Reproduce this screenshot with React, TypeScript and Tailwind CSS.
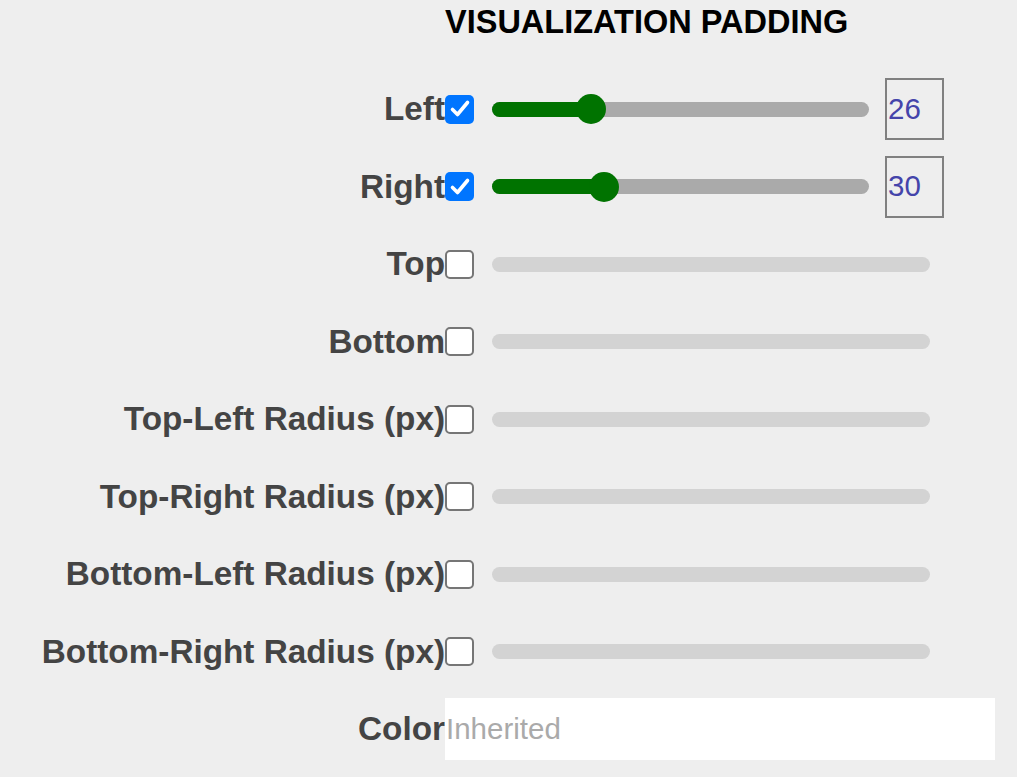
import React from "react";

const font = { fontFamily: '"Liberation Sans", Arial, sans-serif' };

function Check({ checked }: { checked: boolean }) {
  if (checked) {
    return (
      <div className="w-[29px] h-[29px] rounded-[5px] bg-[#0075ff] flex items-center justify-center shrink-0">
        <svg width="22" height="22" viewBox="0 0 22 22">
          <path d="M3.5 11.5 L8.5 16.5 L18.5 4.5" fill="none" stroke="#fff" strokeWidth="3.6" strokeLinecap="round" strokeLinejoin="round" />
        </svg>
      </div>
    );
  }
  return <div className="w-[29px] h-[29px] rounded-[5px] bg-white border-[2.5px] border-[#767676] shrink-0" />;
}

function Row({ label, checked, value, pos }: { label: string; checked: boolean; value?: number; pos?: number }) {
  return (
    <>
      <div className="h-[77.5px] flex items-center justify-end text-[33.3px] font-bold text-[#444444] whitespace-nowrap">{label}</div>
      <div className="h-[77.5px] flex items-center">
        <Check checked={checked} />
        {checked ? (
          <>
            <div className="ml-[18px] w-[377px] h-[15px] rounded-full bg-[#aaaaaa] relative">
              <div className="absolute left-0 top-0 h-[15px] rounded-full bg-[#007300]" style={{ width: `${pos}%` }} />
              <div
                className="absolute top-1/2 w-[30px] h-[30px] -translate-x-1/2 -translate-y-1/2 rounded-full bg-[#007300]"
                style={{ left: `${pos}%` }}
              />
            </div>
            <div className="ml-[16px] w-[59px] h-[62px] border-2 border-[#808080] flex items-center pl-[1px] text-[29.5px] text-[#4444aa]">
              {value}
            </div>
          </>
        ) : (
          <div className="ml-[18px] w-[438px] h-[15px] rounded-full bg-[#d3d3d3]" />
        )}
      </div>
    </>
  );
}

export default function App() {
  return (
    <div className="w-[1017px] h-[777px] bg-[#eeeeee] overflow-hidden" style={font}>
      <div className="grid grid-cols-[445px_572px]">
        <div className="h-[70.25px]" />
        <div className="h-[70.25px] pt-[4px] text-[32.5px] leading-[37px] font-bold text-black whitespace-nowrap">
          VISUALIZATION PADDING
        </div>
        <Row label="Left" checked value={26} pos={26.3} />
        <Row label="Right" checked value={30} pos={29.7} />
        <Row label="Top" checked={false} />
        <Row label="Bottom" checked={false} />
        <Row label="Top-Left Radius (px)" checked={false} />
        <Row label="Top-Right Radius (px)" checked={false} />
        <Row label="Bottom-Left Radius (px)" checked={false} />
        <Row label="Bottom-Right Radius (px)" checked={false} />
        <div className="h-[77.5px] flex items-center justify-end text-[33.3px] font-bold text-[#444444]">Color</div>
        <div className="h-[77.5px] flex items-center">
          <div className="w-[550px] h-[62px] bg-white flex items-center pl-[1px] text-[29.5px] text-[#aaaaaa]">Inherited</div>
        </div>
      </div>
    </div>
  );
}
